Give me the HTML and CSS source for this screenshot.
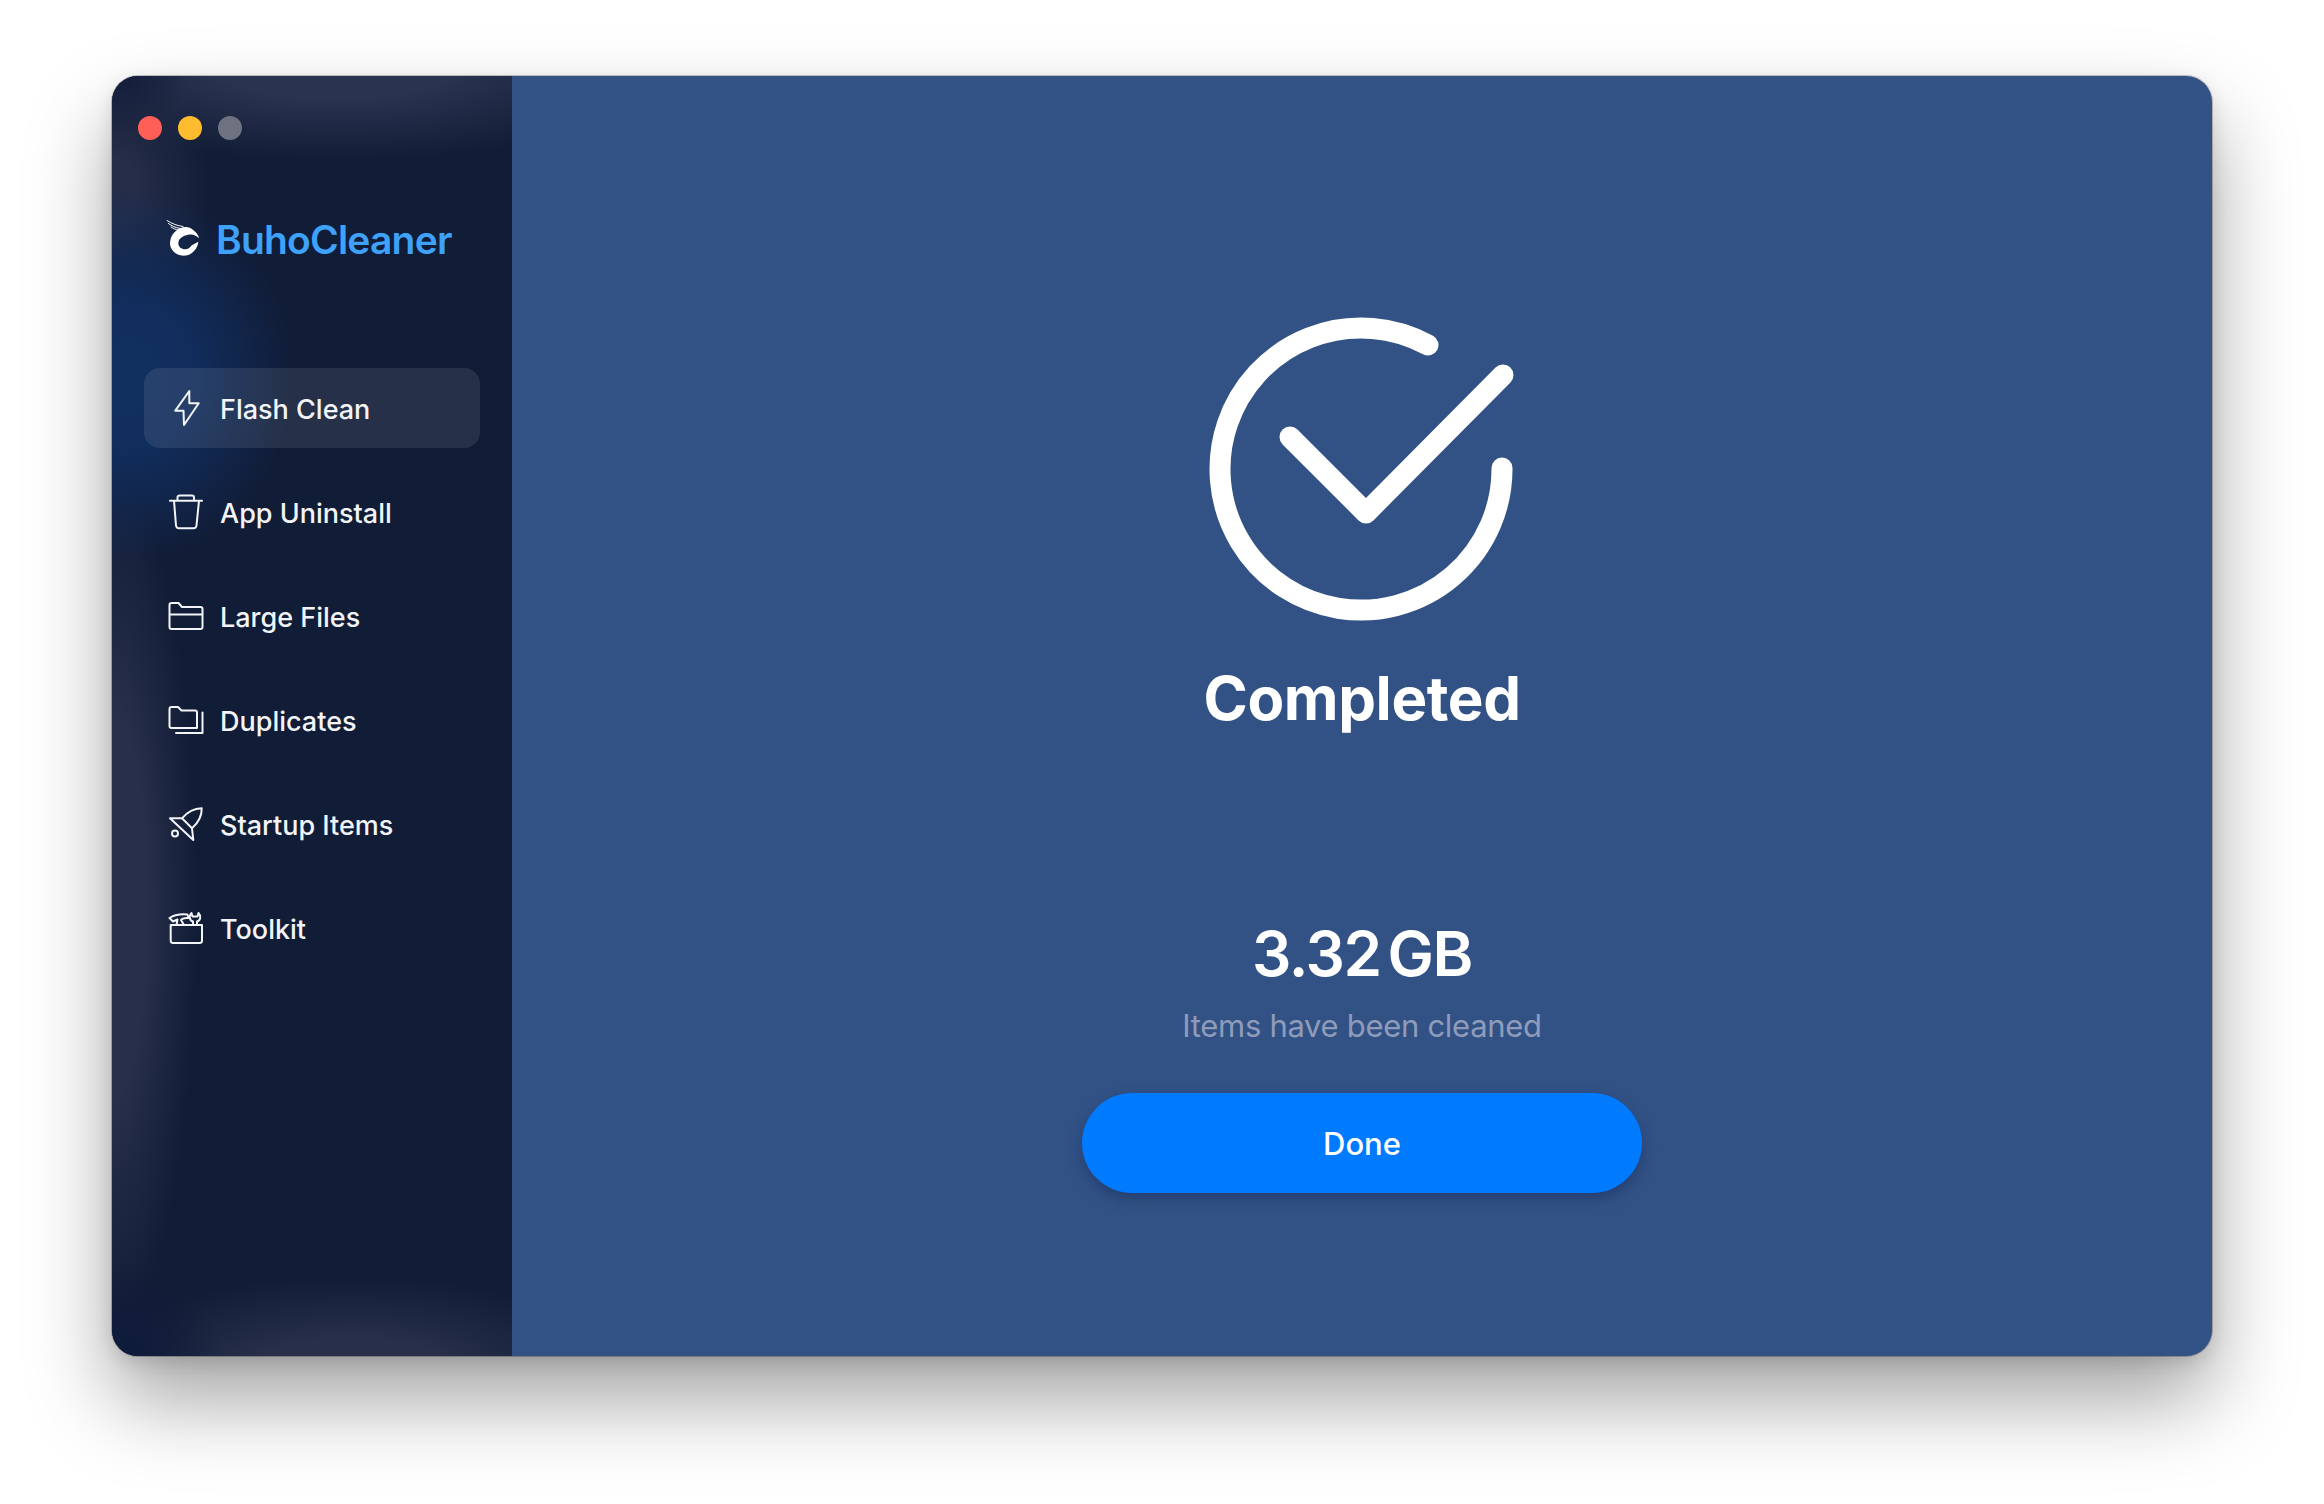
FILE: index.html
```html
<!DOCTYPE html>
<html lang="en">
<head>
  <meta charset="UTF-8">
  <title>BuhoCleaner</title>
  <link rel="stylesheet" href="styles.css">
</head>
<body>
  <div class="window">
    <aside class="sidebar">
      <div class="traffic-lights">
        <span class="light light-close"></span>
        <span class="light light-min"></span>
        <span class="light light-max"></span>
      </div>

      <div class="brand">
        <svg class="brand-logo" viewBox="0 0 34 38">
          <path class="logo-feather" d="M1 .5C6 3.500 10 5.500 17 6.500M2.500 3.500C6 6 9 7.500 14 8.500M5 7C7.500 8.500 9.500 9.500 12 10" />
          <path class="logo-swoosh" d="M9 11.700C13 7.500 19 6 23 7.500C28 9.500 32 14 33.300 18.300C30 15.500 27 14 23.500 14.500C20 15 12.300 17 12.300 23.300C12.300 27 15.500 29.300 19 29.300C22 29.300 24 27.500 25.500 25.500L32.300 21.700C32 28 26 35.700 18 35.700C10 35.700 4 30 4 23.300C4 18.500 6 14.500 9 11.700Z" />
        </svg>
        <span class="brand-name">BuhoCleaner</span>
      </div>

      <nav class="nav">
        <a class="nav-item active">
          <svg class="nav-icon" viewBox="0 0 36 36"><path d="M21.300 1 7.300 20.700H15.500L16 35 30.700 13.300H21.300Z" /></svg>
          <span>Flash Clean</span>
        </a>
        <a class="nav-item">
          <svg class="nav-icon" viewBox="0 0 36 36"><path d="M2 6.700H34M9.500 6.700V3.500Q9.500 1.500 11.500 1.500H24Q26 1.500 26 3.500V6.700M6 6.700 8 31.500Q8.300 34.300 11 34.300H25.500Q28.200 34.300 28.500 31.500L31 6.700" /></svg>
          <span>App Uninstall</span>
        </a>
        <a class="nav-item">
          <svg class="nav-icon" viewBox="0 0 36 36"><path d="M1.500 16.500H34.500M1.500 7Q1.500 5 3.500 5H10.500L14 9H32.500Q34.500 9 34.500 11V29Q34.500 31 32.500 31H3.500Q1.500 31 1.500 29Z" /></svg>
          <span>Large Files</span>
        </a>
        <a class="nav-item">
          <svg class="nav-icon" viewBox="0 0 36 36"><path d="M1.500 7Q1.500 5 3.500 5H10L13.500 8.500H27Q29 8.500 29 10.500V26H3.500Q1.500 26 1.500 24ZM8 31H34.500V10.500" /></svg>
          <span>Duplicates</span>
        </a>
        <a class="nav-item">
          <svg class="nav-icon" viewBox="0 0 36 36"><path d="M2 12.300H14C19 6.500 26 2.500 33.700 2.300C34 10 30 17 24 22.300L25.300 34ZM14 12.300 24 22.300" /><circle cx="7" cy="27.500" r="3" /></svg>
          <span>Startup Items</span>
        </a>
        <a class="nav-item">
          <svg class="nav-icon" viewBox="0 0 36 36"><path d="M2.700 15H34V30.500Q34 33 31.500 33H5.200Q2.700 33 2.700 30.500ZM8.500 15 9.500 9.500 5 11.500 1.500 8Q8 3.500 19.500 4.500L20.500 8Q14.500 7.500 13 10L16 15M25 15V11.500C21.500 10.500 20.500 6 23.500 3L24.500 6.500H29.500L30.500 3C33.500 6 32.500 10.500 29 11.500V15" /></svg>
          <span>Toolkit</span>
        </a>
      </nav>
    </aside>

    <main class="main">
      <svg class="done-check" viewBox="0 0 320 320">
        <path d="M226 36A141 141 0 1 0 300 159" />
        <path d="M88 128 164 204 301 66" />
      </svg>
      <h1 class="title">Completed</h1>
      <div class="amount">3.32<span class="amount-unit">GB</span></div>
      <p class="caption">Items have been cleaned</p>
      <button class="done-button">Done</button>
    </main>
  </div>
</body>
</html>
```
FILE: styles.css
```css
* {
  margin: 0;
  padding: 0;
  box-sizing: border-box;
}

body {
  font-family: Inter, "Liberation Sans", sans-serif;
  background-color: #fff;
  color: #fff;
  width: 2324px;
  height: 1504px;
  padding: 76px 112px;
  overflow: hidden;
}

.window {
  display: flex;
  width: 2100px;
  height: 1280px;
  border-radius: 26px;
  overflow: hidden;
  background: #325286;
  box-shadow: 0 0 0 1px rgba(0, 0, 0, 0.22), 0 6px 18px rgba(0, 0, 0, 0.12), 0 44px 84px rgba(0, 0, 0, 0.36);
}

.sidebar {
  flex: none;
  width: 400px;
  padding: 40px 32px 0;
  background-color: #111c36;
  background-image:
    radial-gradient(ellipse 170px 190px at 15px 300px, #113060 0%, #112d5c 40%, rgba(17, 45, 92, 0) 100%),
    radial-gradient(ellipse 100px 100px at 10px 1285px, #0f1b3a 20%, rgba(15, 27, 58, 0) 100%),
    radial-gradient(ellipse 70px 60px at 5px 0, #16203c 20%, rgba(22, 32, 60, 0) 100%),
    radial-gradient(ellipse 270px 95px at 240px 1295px, #272f4a 35%, rgba(39, 47, 74, 0) 100%),
    radial-gradient(ellipse 90px 440px at -5px 830px, #272f4a 45%, rgba(39, 47, 74, 0) 100%),
    radial-gradient(ellipse 100px 130px at 0 115px, #252d48 25%, rgba(37, 45, 72, 0) 100%),
    radial-gradient(ellipse 330px 95px at 225px -10px, #2a3350 35%, rgba(42, 51, 80, 0) 100%);
}

.traffic-lights {
  display: flex;
  gap: 16px;
  margin-left: -6px;
}

.light {
  width: 24px;
  height: 24px;
  border-radius: 50%;
}

.light-close {
  background: #ff5f57;
}

.light-min {
  background: #febc2e;
}

.light-max {
  background: #6d7180;
}

.brand {
  display: flex;
  align-items: center;
  gap: 16px;
  margin: 76px 0 0 22px;
  height: 48px;
}

.brand-logo {
  flex: none;
  width: 34px;
  height: 38px;
  margin-bottom: 2px;
}

.logo-feather {
  fill: none;
  stroke: #fff;
  stroke-width: 1;
  stroke-linecap: round;
}

.logo-swoosh {
  fill: #fff;
}

.brand-name {
  font-size: 39px;
  font-weight: 600;
  line-height: 48px;
  letter-spacing: -0.8px;
  color: #3ea2fb;
}

.nav {
  display: flex;
  flex-direction: column;
  gap: 24px;
  margin-top: 104px;
}

.nav-item {
  display: flex;
  align-items: center;
  gap: 16px;
  height: 80px;
  padding-left: 24px;
  border-radius: 16px;
  font-size: 27px;
  font-weight: 500;
  color: #f2f4f8;
}

.nav-item span {
  margin-top: 3px;
}

.nav-item.active {
  background: rgba(255, 255, 255, 0.09);
}

.nav-icon {
  flex: none;
  width: 36px;
  height: 36px;
  fill: none;
  stroke: #f2f4f8;
  stroke-width: 2;
  stroke-linecap: round;
  stroke-linejoin: round;
}

.main {
  flex: 1;
  display: flex;
  flex-direction: column;
  align-items: center;
  padding-top: 233px;
}

.done-check {
  width: 320px;
  height: 320px;
  fill: none;
  stroke: #fff;
  stroke-width: 21;
  stroke-linecap: round;
  stroke-linejoin: round;
}

.title {
  margin-top: 33px;
  font-size: 60px;
  font-weight: 700;
  line-height: 72px;
  letter-spacing: -0.4px;
}

.amount {
  margin-top: 182px;
  font-size: 62px;
  font-weight: 600;
  line-height: 76px;
  letter-spacing: -1.5px;
}

.amount-unit {
  margin-left: 7px;
}

.caption {
  margin-top: 14px;
  font-size: 31px;
  line-height: 40px;
  letter-spacing: -0.3px;
  color: #8f9cb9;
}

.done-button {
  margin-top: 47px;
  width: 560px;
  height: 100px;
  border: none;
  border-radius: 50px;
  background: #007aff;
  color: #fff;
  font-family: inherit;
  font-size: 31px;
  font-weight: 500;
  box-shadow: 0 6px 14px rgba(15, 30, 70, 0.35);
}
```
